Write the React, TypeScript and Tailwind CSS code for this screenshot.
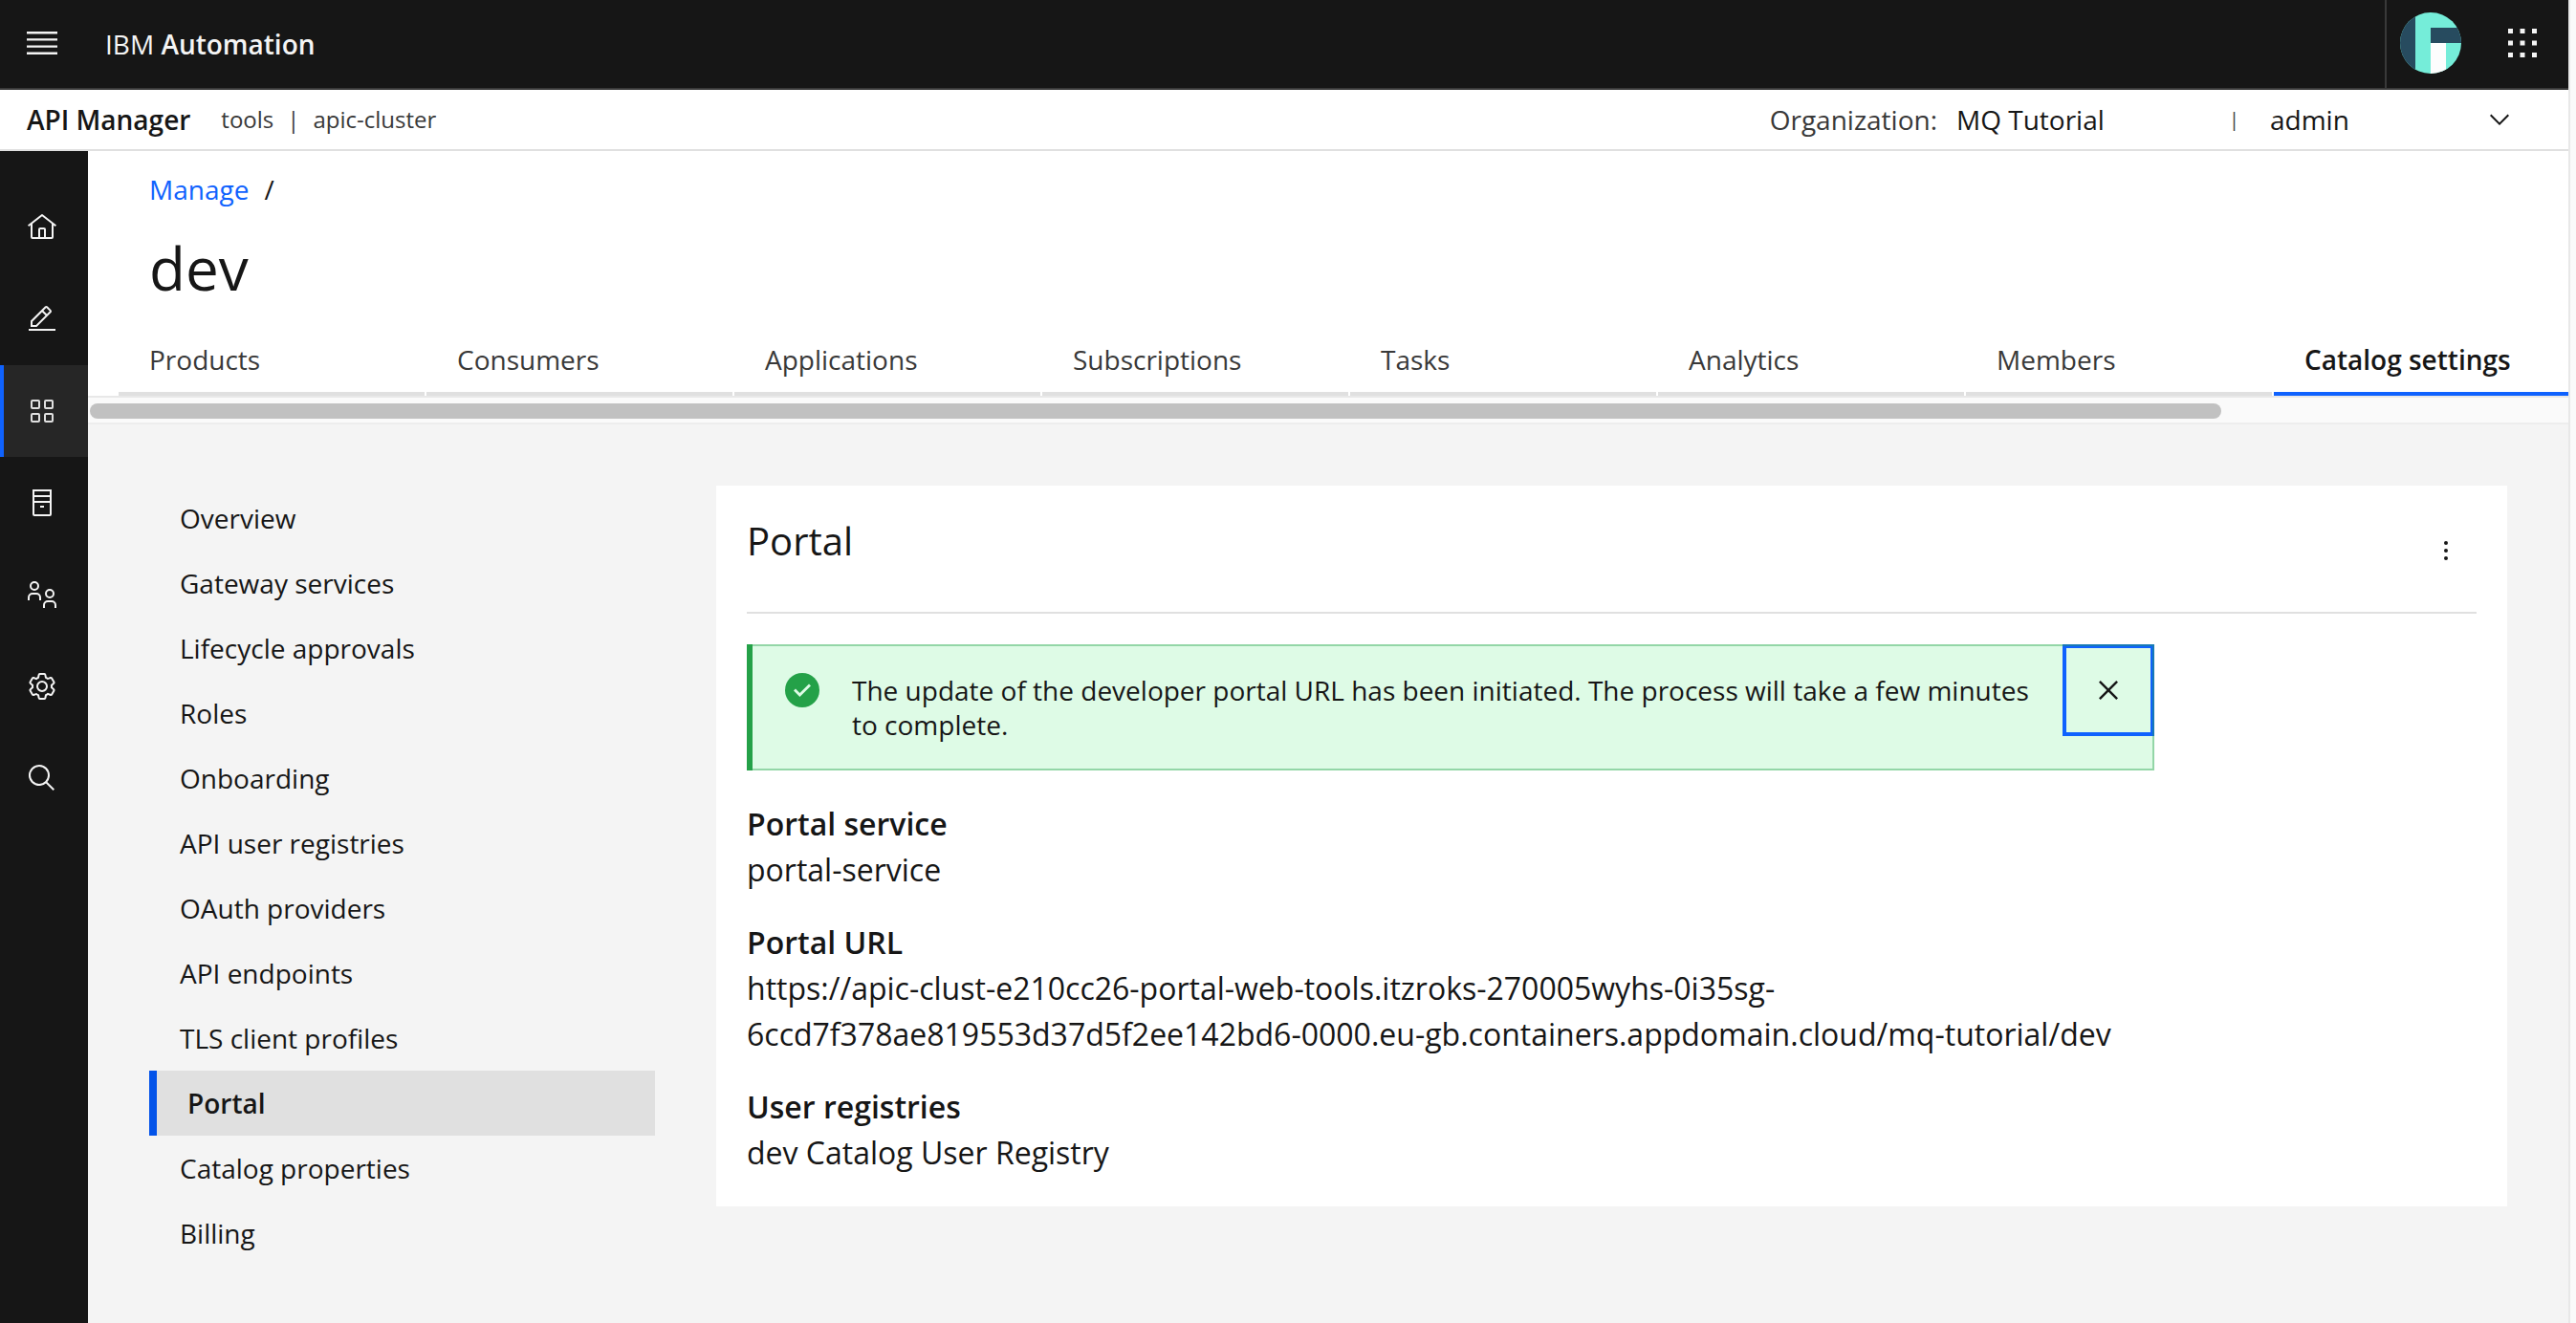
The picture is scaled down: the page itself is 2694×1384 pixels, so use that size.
import type { ReactNode } from "react";

const tabs = [
  "Products",
  "Consumers",
  "Applications",
  "Subscriptions",
  "Tasks",
  "Analytics",
  "Members",
  "Catalog settings",
];

const settings = [
  "Overview",
  "Gateway services",
  "Lifecycle approvals",
  "Roles",
  "Onboarding",
  "API user registries",
  "OAuth providers",
  "API endpoints",
  "TLS client profiles",
  "Portal",
  "Catalog properties",
  "Billing",
];

function Icon({ children, box = 32, className = "size-8" }: { children: ReactNode; box?: number; className?: string }) {
  return (
    <svg viewBox={`0 0 ${box} ${box}`} className={className} fill="currentColor" aria-hidden="true">
      {children}
    </svg>
  );
}

const rail: { label: string; icon: ReactNode }[] = [
  {
    label: "Home",
    icon: (
      <path d="M16.61 2.21a1 1 0 0 0-1.24 0L1 13.42l1.24 1.57L4 13.62V26a2 2 0 0 0 2 2h20a2 2 0 0 0 2-2V13.63L29.76 15 31 13.43ZM18 26h-4v-8h4Zm2 0v-8a2 2 0 0 0-2-2h-4a2 2 0 0 0-2 2v8H6V12.06l10-7.79 10 7.8V26Z" />
    ),
  },
  {
    label: "Develop",
    icon: (
      <>
        <path d="M2 26h28v2H2z" />
        <path d="M25.4 9c.8-.8.8-2 0-2.8l-3.6-3.6c-.8-.8-2-.8-2.8 0l-15 15V24h6.4l15-15Zm-5-5L24 7.6l-3 3L17.4 7l3-3ZM6 22v-3.6l10-10 3.6 3.6-10 10H6Z" />
      </>
    ),
  },
  {
    label: "Manage",
    icon: (
      <path d="M12 4H6a2 2 0 0 0-2 2v6a2 2 0 0 0 2 2h6a2 2 0 0 0 2-2V6a2 2 0 0 0-2-2Zm0 8H6V6h6ZM26 4h-6a2 2 0 0 0-2 2v6a2 2 0 0 0 2 2h6a2 2 0 0 0 2-2V6a2 2 0 0 0-2-2Zm0 8h-6V6h6ZM12 18H6a2 2 0 0 0-2 2v6a2 2 0 0 0 2 2h6a2 2 0 0 0 2-2v-6a2 2 0 0 0-2-2Zm0 8H6v-6h6ZM26 18h-6a2 2 0 0 0-2 2v6a2 2 0 0 0 2 2h6a2 2 0 0 0 2-2v-6a2 2 0 0 0-2-2Zm0 8h-6v-6h6Z" />
    ),
  },
  {
    label: "Resources",
    icon: (
      <>
        <path d="M6 2v26a2 2 0 0 0 2 2h16a2 2 0 0 0 2-2V2Zm18 2v4H8V4Zm0 6v4H8v-4ZM8 28V16h16v12Z" />
        <path d="M14 19h4v2h-4z" />
      </>
    ),
  },
  {
    label: "Members",
    icon: (
      <g fill="none" stroke="currentColor" strokeWidth="2">
        <circle cx="8" cy="7" r="4" />
        <path d="M2 22v-3a4 4 0 0 1 4-4h4a4 4 0 0 1 4 4v3" />
        <circle cx="24" cy="15" r="4" />
        <path d="M18 30v-3a4 4 0 0 1 4-4h4a4 4 0 0 1 4 4v3" />
      </g>
    ),
  },
  {
    label: "Settings",
    icon: (
      <>
        <path d="M27 16.76c0-.25 0-.5 0-.76s0-.51 0-.77l1.92-1.68A2 2 0 0 0 29.3 11L26.94 7a2 2 0 0 0-1.73-1 2 2 0 0 0-.64.1l-2.43.82a11.35 11.35 0 0 0-1.31-.75l-.51-2.52a2 2 0 0 0-2-1.61h-4.68a2 2 0 0 0-2 1.61l-.51 2.52a11.48 11.48 0 0 0-1.32.75l-2.38-.86A2 2 0 0 0 6.79 6a2 2 0 0 0-1.73 1L2.7 11a2 2 0 0 0 .41 2.51L5 15.24c0 .25 0 .5 0 .76s0 .51 0 .77l-1.89 1.68A2 2 0 0 0 2.7 21l2.36 4a2 2 0 0 0 1.73 1 2 2 0 0 0 .64-.1l2.43-.82a11.35 11.35 0 0 0 1.31.75l.51 2.52a2 2 0 0 0 2 1.61h4.72a2 2 0 0 0 2-1.61l.51-2.52a11.48 11.48 0 0 0 1.32-.75l2.42.82a2 2 0 0 0 .64.1 2 2 0 0 0 1.73-1l2.28-4a2 2 0 0 0-.41-2.51ZM25.21 24l-3.43-1.16a8.86 8.86 0 0 1-2.71 1.57L18.36 28h-4.72l-.71-3.55a9.36 9.36 0 0 1-2.7-1.57L6.79 24l-2.36-4 2.72-2.4a8.9 8.9 0 0 1 0-3.13L4.43 12l2.36-4 3.43 1.16a8.86 8.86 0 0 1 2.71-1.57L13.64 4h4.72l.71 3.55a9.36 9.36 0 0 1 2.7 1.57L25.21 8l2.36 4-2.72 2.4a8.9 8.9 0 0 1 0 3.13L27.57 20Z" />
        <path d="M16 22a6 6 0 1 1 6-6 5.94 5.94 0 0 1-6 6Zm0-10a3.91 3.91 0 0 0-4 4 3.91 3.91 0 0 0 4 4 3.91 3.91 0 0 0 4-4 3.91 3.91 0 0 0-4-4Z" />
      </>
    ),
  },
  {
    label: "Search",
    icon: (
      <path d="m29 27.59-7.55-7.56a11.02 11.02 0 1 0-1.42 1.42L27.59 29ZM4 13a9 9 0 1 1 9 9 9 9 0 0 1-9-9Z" />
    ),
  },
];

function TopBar() {
  return (
    <header className="flex h-[94px] items-center border-b-2 border-[#393939] bg-[#161616] text-[#f4f4f4]">
      <button type="button" aria-label="Open menu" className="ml-7 pb-0.5">
        <svg viewBox="0 0 32 24" className="h-6 w-8" fill="currentColor" aria-hidden="true">
          <path d="M0 0h32v2.4H0zM0 7.2h32v2.4H0zM0 14.4h32v2.4H0zM0 21.6h32V24H0z" />
        </svg>
      </button>
      <a href="#home" className="ml-[50px]">
        IBM <span className="font-semibold">Automation</span>
      </a>
      <div className="ml-auto flex h-full items-center border-l-2 border-[#393939] pl-3.5">
        <button type="button" aria-label="Account" className="pb-0.5">
          <svg viewBox="0 0 64 64" className="size-16 rounded-full" aria-hidden="true">
            <path d="M0 0h64v64H0z" fill="#75edd9" />
            <path d="M0 0h16v64H0zM32 16h32v16H32z" fill="#274b5f" />
            <path d="M32 32h16v32H32z" fill="#fdfdfd" />
          </svg>
        </button>
        <button type="button" aria-label="App switcher" className="mr-7 ml-11 pb-0.5">
          <Icon className="size-10">
            <path d="M4 4h4v4H4zM14 4h4v4h-4zM24 4h4v4h-4zM4 14h4v4H4zM14 14h4v4h-4zM24 14h4v4h-4zM4 24h4v4H4zM14 24h4v4h-4zM24 24h4v4h-4z" />
          </Icon>
        </button>
      </div>
    </header>
  );
}

function ContextBar() {
  return (
    <div className="flex h-16 items-center border-b-2 border-[#e0e0e0] bg-white pr-10 pl-7">
      <span className="font-semibold">API Manager</span>
      <span className="ml-8 text-2xl text-[#393939]">tools</span>
      <span className="mx-3.5 text-2xl text-[#393939]">|</span>
      <span className="text-2xl text-[#393939]">apic-cluster</span>
      <div className="ml-auto flex items-center">
        <span className="text-[#393939]">Organization:</span>
        <span className="ml-5 w-[285px]">MQ Tutorial</span>
        <span className="w-[43px] text-xl text-[#393939]">|</span>
        <div className="relative w-[272px]">
          <select aria-label="Role" defaultValue="admin" className="block w-full appearance-none bg-transparent">
            <option value="admin">admin</option>
          </select>
          <span className="pointer-events-none absolute inset-y-0 right-4 flex items-center">
            <Icon box={16}>
              <path d="m8 11-5-5 .7-.7L8 9.6l4.3-4.3.7.7z" />
            </Icon>
          </span>
        </div>
      </div>
    </div>
  );
}

function Rail() {
  return (
    <nav aria-label="Main" className="flex w-[92px] shrink-0 flex-col bg-[#161616] pt-8 text-[#f4f4f4]">
      {rail.map(({ label, icon }) => (
        <a
          key={label}
          href={`#${label.toLowerCase()}`}
          aria-label={label}
          className={
            label === "Manage"
              ? "flex h-24 items-center border-l-4 border-[#0f62fe] bg-[#262626] pl-6 text-[#e0e0e0]"
              : "flex h-24 items-center pl-7"
          }
        >
          <Icon>{icon}</Icon>
        </a>
      ))}
    </nav>
  );
}

function PageHeader() {
  return (
    <div className="bg-white pt-[22px]">
      <div className="flex gap-4 px-16">
        <a href="#manage" className="text-[#0f62fe]">
          Manage
        </a>
        <span>/</span>
      </div>
      <h1 className="mt-6 px-16 text-[62px] leading-[80px]">dev</h1>
      <div role="tablist" className="flex gap-0.5 overflow-hidden pl-8">
        {tabs.map((tab) => (
          <button
            key={tab}
            type="button"
            role="tab"
            aria-selected={tab === "Catalog settings"}
            className={
              tab === "Catalog settings"
                ? "w-80 shrink-0 border-b-4 border-[#0f62fe] px-8 pt-[38px] pb-4 text-left font-semibold"
                : "w-80 shrink-0 border-b-4 border-[#e0e0e0] px-8 pt-[38px] pb-4 text-left text-[#393939]"
            }
          >
            {tab}
          </button>
        ))}
      </div>
      <div className="border-t-2 border-b-2 border-t-[#e8e8e8] border-b-[#ededed] bg-[#fafafa] pt-1.5 pb-1 pl-0.5">
        <div className="h-4 w-[86%] rounded-full bg-[#c1c1c1]" />
      </div>
    </div>
  );
}

function SettingsNav() {
  return (
    <nav aria-label="Catalog settings" className="w-[529px] shrink-0">
      <ul>
        {settings.map((item) => (
          <li key={item}>
            <a
              href="#settings"
              className={
                item === "Portal"
                  ? "flex h-[68px] items-center border-l-8 border-[#0353e9] bg-[#e0e0e0] pl-8 font-semibold"
                  : "flex h-[68px] items-center pl-8"
              }
            >
              {item}
            </a>
          </li>
        ))}
      </ul>
    </nav>
  );
}

function Notification() {
  return (
    <div
      role="status"
      className="relative mt-8 flex max-w-[1472px] items-start border-l-6 border-[#24a148] bg-[#defbe6] py-[30px] pr-32 pl-8 after:pointer-events-none after:absolute after:inset-0 after:border-2 after:border-l-0 after:border-[#24a148]/40"
    >
      <Icon box={20} className="-mt-0.5 size-10 shrink-0">
        <circle cx="10" cy="10" r="9" fill="#24a148" />
        <path d="m8.7 13.5-3.2-3.2 1-1 2.2 2.2 4.8-4.8 1 1z" fill="#defbe6" />
      </Icon>
      <p className="ml-8">
        The update of the developer portal URL has been initiated. The process will take a few minutes to complete.
      </p>
      <button
        type="button"
        aria-label="Close notification"
        className="absolute top-0 right-0 flex size-24 items-center justify-center border-4 border-[#0f62fe]"
      >
        <Icon className="size-10">
          <path d="M24 9.4 22.6 8 16 14.6 9.4 8 8 9.4l6.6 6.6L8 22.6 9.4 24l6.6-6.6 6.6 6.6 1.4-1.4-6.6-6.6z" />
        </Icon>
      </button>
    </div>
  );
}

function PortalCard() {
  return (
    <main className="min-w-0 flex-1 bg-white px-8 pb-8">
      <div className="flex h-[134px] items-start justify-between border-b-2 border-[#e0e0e0] pt-[30px]">
        <h2 className="text-[40px] leading-[56px]">Portal</h2>
        <button type="button" aria-label="Portal options" className="mt-1.5 flex size-16 items-center justify-center">
          <Icon>
            <circle cx="16" cy="8" r="2" />
            <circle cx="16" cy="16" r="2" />
            <circle cx="16" cy="24" r="2" />
          </Icon>
        </button>
      </div>
      <Notification />
      <dl className="mt-8 max-w-[1472px] text-[32px] leading-[48px]">
        <dt className="font-semibold">Portal service</dt>
        <dd>portal-service</dd>
        <dt className="mt-7 font-semibold">Portal URL</dt>
        <dd>
          https://apic-clust-e210cc26-portal-web-tools.itzroks-270005wyhs-0i35sg-
          <wbr />
          6ccd7f378ae819553d37d5f2ee142bd6-0000.eu-gb.containers.appdomain.cloud/mq-tutorial/dev
        </dd>
        <dt className="mt-7 font-semibold">User registries</dt>
        <dd>dev Catalog User Registry</dd>
      </dl>
    </main>
  );
}

export default function App() {
  return (
    <div className="flex min-h-screen bg-[#f4f4f4] font-['Open_Sans',sans-serif] text-[28px] leading-9 text-[#161616]">
      <div className="flex min-w-0 flex-1 flex-col">
        <TopBar />
        <ContextBar />
        <div className="flex flex-1">
          <Rail />
          <div className="min-w-0 flex-1">
            <PageHeader />
            <div className="flex items-start gap-16 px-16 pt-16">
              <SettingsNav />
              <PortalCard />
            </div>
          </div>
        </div>
      </div>
      <div className="w-2 shrink-0 border-l-2 border-[#e8e8e8] bg-[#fafafa]" />
    </div>
  );
}
